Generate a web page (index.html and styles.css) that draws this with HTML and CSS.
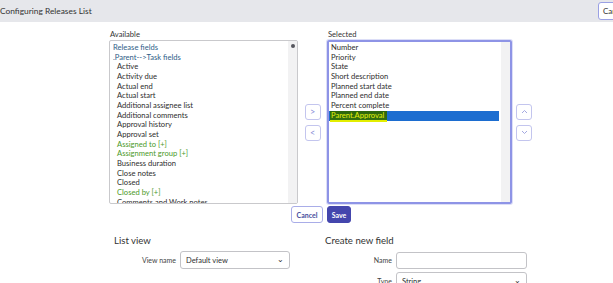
FILE: index.html
```html
<!DOCTYPE html>
<html lang="en">

<head>
    <meta charset="UTF-8">
    <title>Configuring Releases List</title>
    <link rel="stylesheet" href="styles.css">
</head>

<body>
    <!-- Header -->
    <div class="top">
        <h1>Configuring Releases List</h1>
        <button class="top-btn">Cancel</button>
    </div>

    <!-- Slushbucket -->
    <div class="bucket">
        <div class="col">
            <label>Available</label>
            <div class="list">
                <div class="items">
                    <div class="grp">Release fields</div>
                    <div class="grp">.Parent--&gt;Task fields</div>
                    <div class="it">Active</div>
                    <div class="it">Activity due</div>
                    <div class="it">Actual end</div>
                    <div class="it">Actual start</div>
                    <div class="it">Additional assignee list</div>
                    <div class="it">Additional comments</div>
                    <div class="it">Approval history</div>
                    <div class="it">Approval set</div>
                    <div class="it ref">Assigned to [+]</div>
                    <div class="it ref">Assignment group [+]</div>
                    <div class="it">Business duration</div>
                    <div class="it">Close notes</div>
                    <div class="it">Closed</div>
                    <div class="it ref">Closed by [+]</div>
                    <div class="it">Comments and Work notes</div>
                </div>
                <div class="scroll"><span class="dot"></span></div>
            </div>
        </div>

        <div class="arrows">
            <button class="arr">&gt;</button>
            <button class="arr">&lt;</button>
        </div>

        <div class="col">
            <label>Selected</label>
            <div class="list focus">
                <div class="items sel">
                    <div>Number</div>
                    <div>Priority</div>
                    <div>State</div>
                    <div>Short description</div>
                    <div>Planned start date</div>
                    <div>Planned end date</div>
                    <div>Percent complete</div>
                    <div class="picked"><span>Parent.Approval</span></div>
                </div>
                <div class="scroll"></div>
            </div>
        </div>

        <div class="arrows right">
            <button class="arr">
                <svg width="7" height="5" viewBox="0 0 7 5"><path d="M1 4 L3.5 1.5 L6 4" fill="none" stroke="#9a9fdc" stroke-width="0.9"/></svg>
            </button>
            <button class="arr">
                <svg width="7" height="5" viewBox="0 0 7 5"><path d="M1 1 L3.5 3.5 L6 1" fill="none" stroke="#9a9fdc" stroke-width="0.9"/></svg>
            </button>
        </div>

        <div class="actions">
            <button class="btn-cancel">Cancel</button>
            <button class="btn-save">Save</button>
        </div>
    </div>

    <!-- Lower forms -->
    <div class="lower">
        <div class="panel left">
            <h2>List view</h2>
            <div class="row">
                <span class="lbl">View name</span>
                <div class="select w110">Default view <span class="caret">&#8964;</span></div>
            </div>
        </div>
        <div class="panel">
            <h2>Create new field</h2>
            <div class="row">
                <span class="lbl">Name</span>
                <div class="input"></div>
            </div>
            <div class="row">
                <span class="lbl">Type</span>
                <div class="select w131">String <span class="caret">&#8964;</span></div>
            </div>
        </div>
    </div>
</body>

</html>
```

FILE: styles.css
```css
body, html {
    margin: 0;
    font-family: Lato, 'Open Sans', sans-serif;
    background: #ffffff;
    color: #2e2e2e;
    overflow: hidden;
}

/* Header */
.top {
    height: 22px;
    background-color: #e6e7eb;
    display: flex;
    align-items: center;
    justify-content: space-between;
}

.top h1 {
    margin: 0;
    font-size: 8.4px;
    font-weight: normal;
    color: #333;
}

.top-btn {
    height: 18px;
    width: 40px;
    margin-right: -25px;
    padding: 0 4px;
    text-align: left;
    background: #fff;
    border: 1px solid #9aa0e4;
    border-radius: 3px;
    font-family: inherit;
    font-size: 8px;
    color: #333;
}

/* Slushbucket */
.bucket {
    display: grid;
    grid-template-columns: 189px 29px 185px 29px;
    margin-left: 109px;
    margin-top: 7px;
}

.col label {
    display: block;
    font-size: 7.6px;
    height: 11px;
    padding-left: 1px;
    color: #333;
}

.list {
    height: 164px;
    box-sizing: border-box;
    border: 1px solid #c9c9cc;
    border-radius: 2px;
    display: flex;
    overflow: hidden;
}

.list.focus {
    border: 2px solid #8e94e6;
    box-shadow: 0 0 0 1px #dcdef7;
}

.items {
    flex: 1;
    padding: 2px 0 0 3px;
    font-size: 7.6px;
    line-height: 9.65px;
    white-space: nowrap;
}

.items.sel {
    padding: 1px 2px 0 0;
}

.items.sel div {
    padding-left: 2px;
}

.grp {
    color: #2f5d87;
}

.it {
    padding-left: 4px;
}

.ref {
    color: #4c9a2a;
}

.scroll {
    width: 9px;
    background: #f2f2f3;
    display: flex;
    justify-content: center;
}

.dot {
    width: 4px;
    height: 4px;
    margin-top: 3px;
    border-radius: 50%;
    background: #55565e;
}

.picked {
    background: #1c6dd0;
    height: 10px;
}

.picked span {
    display: inline-block;
    height: 11px;
    color: #e4f00c;
    background: linear-gradient(#2c660c 0%, #34700f 80%, #e3ee00 80%);
    padding-right: 3px;
    margin-left: -1px;
    padding-left: 1px;
}

.arrows {
    display: flex;
    flex-direction: column;
    justify-content: center;
    align-items: center;
    gap: 5px;
    padding-top: 11px;
}

.arrows.right {
    align-items: flex-start;
    padding-left: 4px;
}

.arr {
    width: 16px;
    height: 16px;
    padding: 0;
    background: #fff;
    border: 1px solid #c3c5ee;
    border-radius: 3px;
    color: #8a8fd8;
    font-family: inherit;
    font-size: 9px;
    display: flex;
    align-items: center;
    justify-content: center;
}

.actions {
    grid-column: 1 / 5;
    display: flex;
    gap: 4px;
    padding-left: 182px;
    margin-top: 2px;
}

.btn-cancel, .btn-save {
    height: 17px;
    font-family: inherit;
    font-size: 7px;
    font-weight: bold;
    border-radius: 3px;
    padding: 0;
}

.btn-cancel {
    width: 32px;
    background: #fff;
    border: 1px solid #a9ade8;
    color: #4a4f9e;
}

.btn-save {
    width: 24px;
    background: #4446ad;
    border: 1px solid #4446ad;
    color: #fff;
}

/* Lower forms */
.lower {
    display: flex;
    margin-top: 12px;
}

.panel {
    width: 210px;
}

.panel.left {
    margin-left: 114px;
    width: 211px;
}

.panel h2 {
    margin: 0 0 5px;
    font-size: 9.6px;
    font-weight: normal;
    color: #333;
}

.row {
    display: flex;
    align-items: center;
    gap: 4px;
    height: 18px;
    margin-bottom: 3px;
}

.left .lbl {
    width: 62px;
}

.lbl {
    width: 67px;
    text-align: right;
    font-size: 7px;
    color: #444;
}

.select, .input {
    height: 18px;
    box-sizing: border-box;
    border: 1px solid #c3c3c7;
    border-radius: 3px;
    font-size: 7.5px;
    padding: 0 5px;
    display: flex;
    align-items: center;
    justify-content: space-between;
}

.w110 {
    width: 110px;
}

.w131 {
    width: 131px;
}

.input {
    width: 131px;
    height: 17px;
}

.caret {
    font-size: 8px;
    line-height: 6px;
    margin-top: -3px;
}
```
